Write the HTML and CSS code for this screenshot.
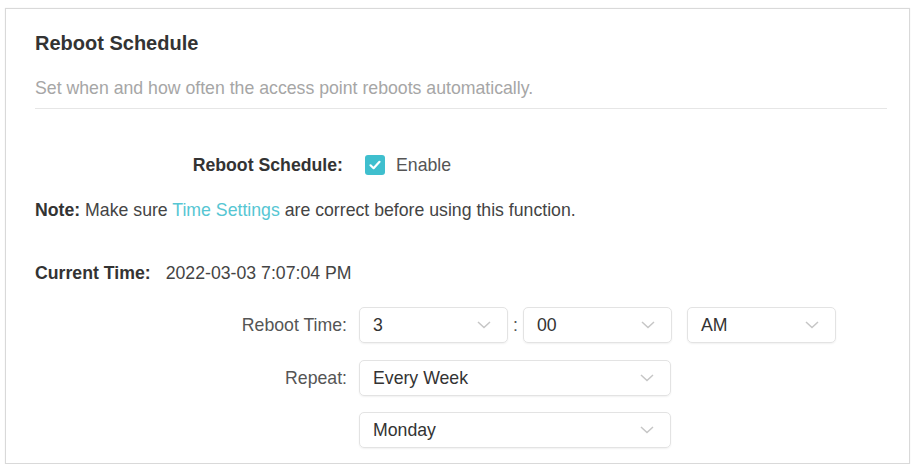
FILE: index.html
```html
<!DOCTYPE html>
<html>
<head>
<meta charset="utf-8">
<link rel="stylesheet" href="styles.css">
</head>
<body>
<div class="card">
  <h2 class="title">Reboot Schedule</h2>
  <p class="subtitle">Set when and how often the access point reboots automatically.</p>
  <div class="divider"></div>

  <div class="field field-enable">
    <div class="label label-strong">Reboot Schedule:</div>
    <label class="check">
      <span class="box"><svg viewBox="0 0 20 20" width="20" height="20"><path d="M5.5 10.3 L8.6 13.2 L14.5 6.8" fill="none" stroke="#fff" stroke-width="2.2" stroke-linecap="round" stroke-linejoin="round"/></svg></span>
      <span class="check-text">Enable</span>
    </label>
  </div>

  <p class="note"><b>Note:</b> Make sure <a class="link">Time Settings</a> are correct before using this function.</p>

  <p class="current"><b>Current Time:</b><span class="current-val">2022-03-03 7:07:04 PM</span></p>

  <div class="field field-time">
    <div class="label">Reboot Time:</div>
    <div class="controls">
      <div class="select sm"><span>3</span><svg class="chev" viewBox="0 0 14 8" width="14" height="8"><path d="M1 1 L7 6.5 L13 1" fill="none" stroke="#c6c6c6" stroke-width="1.5"/></svg></div>
      <span class="colon">:</span>
      <div class="select sm"><span>00</span><svg class="chev" viewBox="0 0 14 8" width="14" height="8"><path d="M1 1 L7 6.5 L13 1" fill="none" stroke="#c6c6c6" stroke-width="1.5"/></svg></div>
      <div class="select sm ampm"><span>AM</span><svg class="chev" viewBox="0 0 14 8" width="14" height="8"><path d="M1 1 L7 6.5 L13 1" fill="none" stroke="#c6c6c6" stroke-width="1.5"/></svg></div>
    </div>
  </div>

  <div class="field field-repeat">
    <div class="label">Repeat:</div>
    <div class="select lg"><span>Every Week</span><svg class="chev" viewBox="0 0 14 8" width="14" height="8"><path d="M1 1 L7 6.5 L13 1" fill="none" stroke="#c6c6c6" stroke-width="1.5"/></svg></div>
  </div>

  <div class="field field-day">
    <div class="label"></div>
    <div class="select lg"><span>Monday</span><svg class="chev" viewBox="0 0 14 8" width="14" height="8"><path d="M1 1 L7 6.5 L13 1" fill="none" stroke="#c6c6c6" stroke-width="1.5"/></svg></div>
  </div>
</div>
</body>
</html>
```
FILE: styles.css
```css
html, body {
  margin: 0;
  padding: 0;
  background: #fff;
}
body {
  font-family: "Liberation Sans", Arial, sans-serif;
  font-size: 17.7px;
  color: #333;
  padding: 8px 2px 0 5px;
}
.card {
  border: 1px solid #d9d9d9;
  box-shadow: 0 0 1px #e6e6e6;
  height: 456px;
  box-sizing: border-box;
  padding: 22px 22px 0 29px;
  width: 905px;
}
.title {
  margin: 0;
  font-size: 20px;
  font-weight: bold;
  line-height: 24px;
  color: #333;
}
.subtitle {
  margin: 21px 0 0;
  line-height: 24px;
  color: #a6a6a6;
}
.divider {
  margin-top: 8px;
  height: 1px;
  background: #e6e6e6;
}
.field {
  display: flex;
  align-items: center;
}
.label {
  width: 312px;
  padding-right: 12px;
  text-align: right;
  color: #555;
  line-height: 24px;
  flex: none;
}
.label-strong {
  color: #333;
  font-weight: bold;
  padding-right: 16px;
  width: 308px;
}
.field-enable {
  margin-top: 44px;
  height: 24px;
}
.check {
  display: flex;
  align-items: center;
}
.box {
  width: 20px;
  height: 20px;
  margin-left: 6px;
  border-radius: 3px;
  background: #3fbfce;
  display: block;
}
.box svg { display: block; }
.check-text {
  margin-left: 11px;
  color: #555;
}
.note {
  margin: 21px 0 0;
  line-height: 24px;
  color: #444;
}
.note b, .current b {
  color: #333;
}
.link {
  color: #56c6d3;
}
.current {
  margin: 39px 0 0;
  line-height: 24px;
}
.current-val {
  margin-left: 15px;
  color: #444;
}
.field-time {
  margin-top: 22px;
}
.field-repeat {
  margin-top: 17px;
}
.field-day {
  margin-top: 16px;
}
.controls {
  display: flex;
  align-items: center;
}
.select {
  height: 36px;
  box-sizing: border-box;
  border: 1px solid #e3e3e3;
  border-radius: 5px;
  box-shadow: 0 1px 2px rgba(0,0,0,0.06);
  display: flex;
  align-items: center;
  justify-content: space-between;
  padding: 0 16px 0 13px;
  color: #333;
}
.select.sm { width: 149px; }
.select.lg { width: 312px; }
.select.ampm { margin-left: 15px; }
.chev { display: block; }
.colon {
  width: 15px;
  text-align: center;
  color: #555;
}
```
